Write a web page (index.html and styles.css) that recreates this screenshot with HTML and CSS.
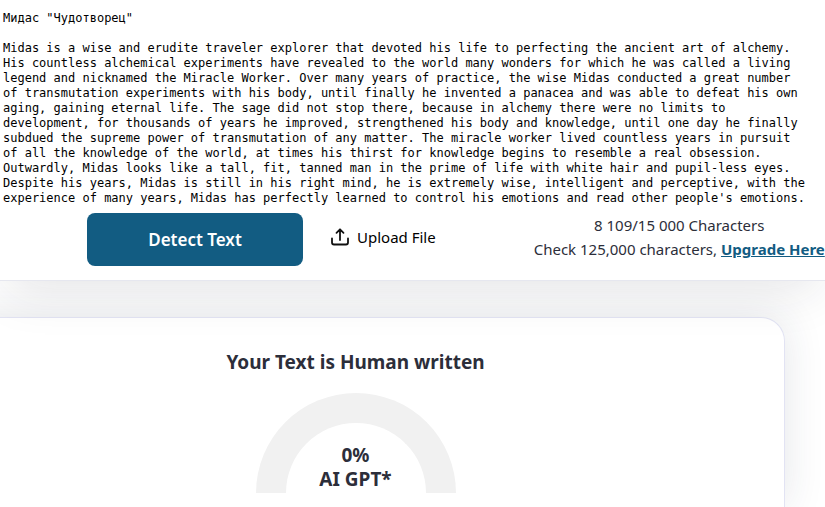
FILE: index.html
```html
<!DOCTYPE html>
<html lang="en">
<head>
    <meta charset="UTF-8">
    <title>AI Text Detector</title>
    <link rel="stylesheet" href="styles.css">
</head>
<body>
    <section class="editor">
        <textarea class="editor-text" aria-label="Text to check" rows="13" wrap="off" spellcheck="false">
Мидас "Чудотворец"

Midas is a wise and erudite traveler explorer that devoted his life to perfecting the ancient art of alchemy.
His countless alchemical experiments have revealed to the world many wonders for which he was called a living
legend and nicknamed the Miracle Worker. Over many years of practice, the wise Midas conducted a great number
of transmutation experiments with his body, until finally he invented a panacea and was able to defeat his own
aging, gaining eternal life. The sage did not stop there, because in alchemy there were no limits to
development, for thousands of years he improved, strengthened his body and knowledge, until one day he finally
subdued the supreme power of transmutation of any matter. The miracle worker lived countless years in pursuit
of all the knowledge of the world, at times his thirst for knowledge begins to resemble a real obsession.
Outwardly, Midas looks like a tall, fit, tanned man in the prime of life with white hair and pupil-less eyes.
Despite his years, Midas is still in his right mind, he is extremely wise, intelligent and perceptive, with the
experience of many years, Midas has perfectly learned to control his emotions and read other people's emotions.</textarea>
        <div class="toolbar">
            <button class="detect-btn" type="button">Detect Text</button>
            <button class="upload-btn" type="button">
                <svg width="18" height="18" viewBox="0 0 18 18" fill="none" stroke="#111" stroke-width="1.8" stroke-linecap="round" stroke-linejoin="round">
                    <path d="M1 10.5v4a2 2 0 0 0 2 2h12a2 2 0 0 0 2-2v-4"/>
                    <path d="M9 12V1.500M5.500 4.800L9 1.300l3.500 3.500"/>
                </svg>
                Upload File
            </button>
            <div class="counter">
                <div>8 109/15 000 Characters</div>
                <div>Check 125,000 characters, <a href="#">Upgrade Here</a></div>
            </div>
        </div>
    </section>

    <section class="result">
        <h2>Your Text is Human written</h2>
        <div class="gauge">
            <span>0%</span>
            <span>AI GPT*</span>
        </div>
    </section>
</body>
</html>
```

FILE: styles.css
```css
* {
    box-sizing: border-box;
}

body {
    margin: 0;
    background: #fff;
    color: #2c2e3a;
    font-family: "Noto Sans", "Open Sans", sans-serif;
    font-size: 15px;
    line-height: 24px;
    overflow-x: hidden;
}

.editor {
    position: relative;
    z-index: 1;
    padding-top: 11px;
    background: #fff;
    border-bottom: 1px solid #e6e7ef;
    box-shadow: 0 16px 48px -8px rgba(30, 35, 50, 0.12);
}

.editor-text {
    display: block;
    width: 100%;
    padding: 0 3px;
    border: none;
    outline: none;
    resize: none;
    overflow: hidden;
    background: transparent;
    color: #000;
    font-family: "DejaVu Sans Mono", "Liberation Mono", monospace;
    font-size: 12px;
    line-height: 15px;
}

.toolbar {
    display: flex;
    align-items: flex-start;
    padding: 7px 0 14px 87px;
    white-space: nowrap;
}

.detect-btn {
    width: 216px;
    height: 53px;
    border: none;
    border-radius: 8px;
    background: #125c82;
    color: #fff;
    font-family: inherit;
    font-size: 17px;
    font-weight: 600;
}

.upload-btn {
    display: flex;
    align-items: center;
    gap: 8px;
    height: 48px;
    margin-left: 28px;
    padding: 0;
    border: none;
    background: none;
    color: #000;
    font-family: inherit;
    font-size: 15px;
}

.counter {
    margin-left: 98px;
    text-align: center;
}

.counter a {
    color: #125c82;
    font-weight: 700;
}

.result {
    margin: 36px 40px 0 -74px;
    padding: 32px 0 14px;
    background: #fff;
    border: 1px solid #e2e3f3;
    border-bottom: none;
    border-radius: 24px 24px 0 0;
    box-shadow: 0 0 40px rgba(30, 50, 70, 0.12);
    text-align: center;
}

.result h2 {
    margin: 0 0 19px;
    font-size: 19px;
    line-height: 24px;
}

.gauge {
    display: flex;
    flex-direction: column;
    justify-content: flex-end;
    width: 200px;
    height: 100px;
    margin: 0 auto;
    padding-bottom: 2px;
    border: 30px solid #f1f1f1;
    border-bottom: none;
    border-radius: 100px 100px 0 0;
    font-size: 19px;
    font-weight: 700;
    line-height: 24px;
}
```
